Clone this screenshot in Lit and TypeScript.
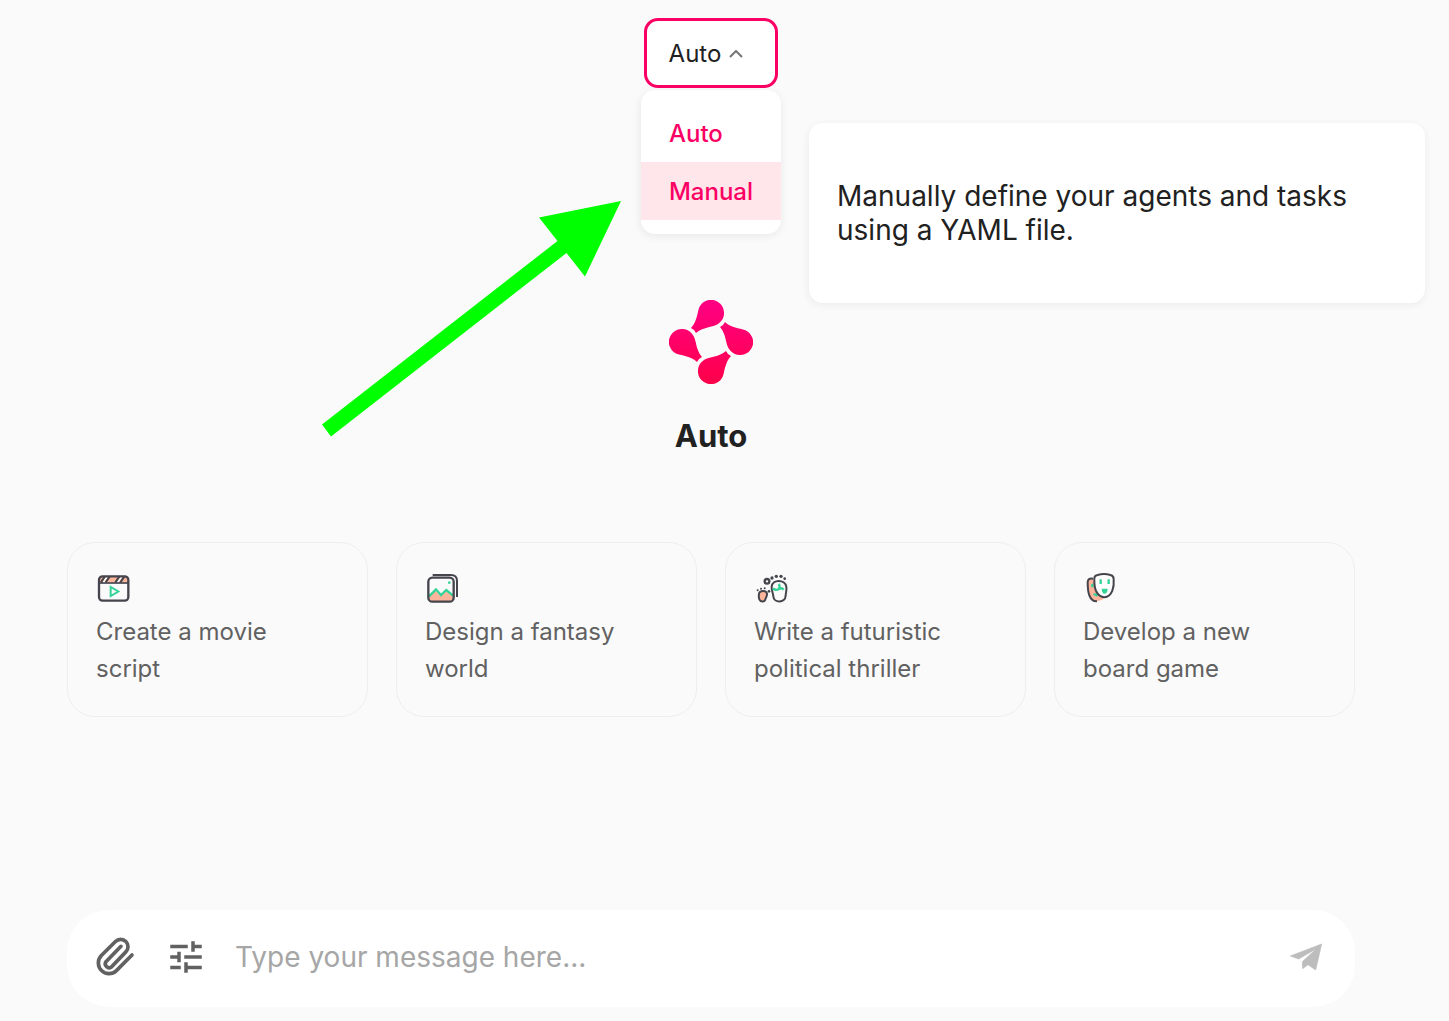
import { LitElement, html, css, svg } from "lit";
import { customElement, state } from "lit/decorators.js";
import { classMap } from "lit/directives/class-map.js";

const DROP = "M22 28C26 24 28 17 29.400 10A13 13 0 1 1 50 23.200C44.500 28 35 26 27 33Q25.500 29.500 22 28Z";

const logo = html`<svg class="logo" viewBox="0 0 84 84" aria-hidden="true">
  <defs>
    <linearGradient id="pink" x1="0" y1="0" x2="0" y2="1">
      <stop offset="0" stop-color="#ff0084" />
      <stop offset="1" stop-color="#ff004a" />
    </linearGradient>
    <clipPath id="drops">
      ${[0, 90, 180, 270].map((a) => svg`<path d=${DROP} transform="rotate(${a} 42 42)" />`)}
    </clipPath>
  </defs>
  <rect width="84" height="84" fill="url(#pink)" clip-path="url(#drops)" />
</svg>`;

const movieIcon = html`<svg class="card-icon" viewBox="108 108 102 102" aria-hidden="true">
  <path d="M118 143V134Q118 124 128 124H194Q204 124 204 134V143Z" fill="#ffb59b" />
  <path d="M130 142L141 126M173 142L184 126" stroke="#fff" stroke-width="5" />
  <path d="M123 142L134 125M137 142L149 125M166 142L178 125M181 142L193 125" stroke="#44454d" stroke-width="6" />
  <rect x="117" y="124" width="88" height="73" rx="11" fill="none" stroke="#44454d" stroke-width="7" />
  <path d="M118 144H204" stroke="#44454d" stroke-width="5" />
  <path d="M152 156V183L175 169.500Z" fill="none" stroke="#36d399" stroke-width="6" />
</svg>`;

const pictureIcon = html`<svg class="card-icon" viewBox="30 18 102 102" aria-hidden="true">
  <path d="M42 96L62 78L76 92L94 80L116 92V98Q116 109 106 109H52Q42 109 42 98Z" fill="#ffb59b" />
  <path d="M42 94L63 73L78 90L94 75L114 92" fill="none" stroke="#36d399" stroke-width="7" />
  <circle cx="103" cy="53" r="4" fill="#36d399" />
  <rect x="40" y="38" width="76" height="72" rx="12" fill="none" stroke="#44454d" stroke-width="7" />
  <path d="M53 30H108Q126 30 126 48V96" fill="none" stroke="#44454d" stroke-width="6" />
</svg>`;

const stepsIcon = html`<svg class="card-icon" viewBox="27 18 102 102" aria-hidden="true">
  <path d="M42 86C44 76 64 74 66 86C67 94 62 98 61 103C59 112 46 111 43 103C41 97 41 92 42 86Z" fill="#ffb59b" stroke="#44454d" stroke-width="6" />
  <path d="M80 65C82 42 120 42 124 65C126 76 122 83 122 92C121 115 86 115 85 94C84 83 79 76 80 65Z" fill="none" stroke="#44454d" stroke-width="6" />
  <path d="M84 70Q92 78 102 72Q106 64 101 57M104 72Q110 67 116 74" fill="none" stroke="#36d399" stroke-width="7" />
  <circle cx="66" cy="49" r="7" fill="none" stroke="#44454d" stroke-width="7" />
  <g fill="#44454d">
    <circle cx="81" cy="39" r="5" />
    <circle cx="94" cy="34" r="5" />
    <circle cx="108" cy="34" r="5" />
    <circle cx="119" cy="41" r="4" />
    <circle cx="38" cy="76" r="3" />
    <circle cx="48" cy="71" r="3" />
    <circle cx="59" cy="70" r="3" />
    <circle cx="72" cy="79" r="4" />
  </g>
</svg>`;

const masksIcon = html`<svg class="card-icon" viewBox="24 18 102 102" aria-hidden="true">
  <path d="M54 41Q38 38 38 52C38 80 42 110 66 109Q80 108 88 100L66 88Z" fill="#ffb59b" />
  <path d="M54 41Q38 38 38 52C38 80 42 110 66 109" fill="none" stroke="#44454d" stroke-width="6" />
  <path d="M52 56V67M56 90Q60 86 67 93" stroke="#36d399" stroke-width="7" fill="none" />
  <path d="M58 40Q58 32 68 30Q87 24 106 30Q116 32 116 42C118 66 112 94 88 97C62 94 57 66 58 40Z" fill="#fff" stroke="#44454d" stroke-width="6" />
  <path d="M77 43V57M101 43V57" stroke="#36d399" stroke-width="7" />
  <path d="M80 71H98Q98 87 86 86Q80 82 80 71Z" fill="#36d399" />
</svg>`;

const clipIcon = html`<svg class="tool-icon" viewBox="107 108 126 126" aria-hidden="true">
  <path d="M218 165L170.600 212.600A32 32 0 0 1 125.400 167.400L168.400 124.400A22 22 0 0 1 199.600 155.600L156 201A11.500 11.500 0 0 1 140 185L185 139" fill="none" stroke="currentColor" stroke-width="11" stroke-linecap="round" />
</svg>`;

const tuneIcon = html`<svg class="tool-icon" viewBox="0 0 24 24" aria-hidden="true">
  <path fill="currentColor" d="M3 17v2h6v-2H3zM3 5v2h10V5H3zm10 16v-2h8v-2h-8v-2h-2v6h2zM7 9v2H3v2h4v2h2V9H7zm14 4v-2H11v2h10zm-6-4h2V7h4V5h-4V3h-2v6z" />
</svg>`;

const sendIcon = html`<svg class="tool-icon" viewBox="45 108 126 126" aria-hidden="true">
  <path d="M61 168L155 132L137 210L114 194L98 206L97 185L139 146L86 177Z" fill="currentColor" stroke="currentColor" stroke-width="2" stroke-linejoin="round" />
</svg>`;

const MODES = ["Auto", "Manual"];

const IDEAS = [
  { icon: movieIcon, text: "Create a movie script" },
  { icon: pictureIcon, text: "Design a fantasy world" },
  { icon: stepsIcon, text: "Write a futuristic political thriller" },
  { icon: masksIcon, text: "Develop a new board game" },
];

@customElement("app-root")
export class AppRoot extends LitElement {
  @state() private mode = "Auto";
  @state() private highlighted = "Manual";
  @state() private open = true;

  static styles = css`
    :host {
      display: block;
      background: #fafafa;
      color: #212121;
      font-family: Inter, "Liberation Sans", sans-serif;
    }
    * {
      box-sizing: border-box;
    }
    button,
    input {
      font: inherit;
      color: inherit;
      border: 0;
      background: none;
      padding: 0;
      margin: 0;
    }
    button {
      cursor: pointer;
    }
    svg {
      display: block;
    }
    .page {
      position: relative;
      min-height: 100vh;
      display: flex;
      flex-direction: column;
      padding: 18px 94px 14px 67px;
      overflow: hidden;
    }
    .picker {
      position: relative;
      align-self: center;
    }
    .picker-button {
      display: flex;
      align-items: center;
      gap: 8px;
      height: 70px;
      padding: 1px 32px 0 22px;
      border: 3px solid #fa0064;
      border-radius: 14px;
      background: #fff;
      font-size: 24px;
      line-height: 36px;
    }
    .chevron {
      width: 14px;
      height: 8px;
    }
    .menu {
      position: absolute;
      top: 72px;
      left: 50%;
      transform: translateX(-50%);
      z-index: 1;
      padding: 14px 0;
      border-radius: 14px;
      background: #fff;
      box-shadow: 0 2px 8px rgba(0, 0, 0, 0.07);
    }
    .option {
      display: block;
      width: 100%;
      height: 58px;
      padding: 0 28px;
      color: #fa0064;
      font-size: 24px;
      font-weight: 500;
      text-align: left;
    }
    .option.highlighted {
      background: #ffe6ea;
    }
    .hint {
      position: absolute;
      top: 33px;
      left: calc(100% + 28px);
      width: 616px;
      padding: 56px 28px;
      border-radius: 14px;
      background: #fff;
      box-shadow: 0 2px 8px rgba(0, 0, 0, 0.06);
      font-size: 28px;
      line-height: 34px;
    }
    .intro {
      display: flex;
      flex-direction: column;
      align-items: center;
      gap: 28px;
      margin-top: 212px;
    }
    .logo {
      width: 84px;
      height: 84px;
    }
    h1 {
      margin: 0;
      font-size: 31px;
      line-height: 48px;
      font-weight: 700;
    }
    .ideas {
      display: grid;
      grid-template-columns: repeat(4, 1fr);
      gap: 28px;
      margin-top: 82px;
    }
    .idea {
      display: flex;
      flex-direction: column;
      gap: 8px;
      min-height: 175px;
      padding: 28px 56px 28px 28px;
      border: 1px solid #eee;
      border-radius: 28px;
      color: #616161;
      font-size: 24px;
      line-height: 37px;
      text-align: left;
    }
    .card-icon {
      width: 34px;
      height: 34px;
    }
    .composer {
      display: flex;
      align-items: center;
      gap: 28px;
      min-height: 97px;
      margin-top: auto;
      padding: 24px 28px 28px;
      border-radius: 42px;
      background: #fff;
      color: #616161;
    }
    .tool-icon {
      width: 42px;
      height: 42px;
    }
    .send {
      color: #bdbdbd;
    }
    .message {
      flex: 1;
      min-width: 0;
      font-size: 28px;
      line-height: 40px;
      outline: none;
    }
    .message::placeholder {
      color: #a6a6a6;
      opacity: 1;
    }
    .arrow {
      position: absolute;
      top: 200px;
      left: 321px;
      width: 301px;
      height: 238px;
      pointer-events: none;
    }
  `;

  private choose(mode: string) {
    this.mode = mode;
    this.open = false;
  }

  render() {
    return html`
      <main class="page">
        <div class="picker">
          <button
            class="picker-button"
            aria-haspopup="listbox"
            aria-expanded=${this.open ? "true" : "false"}
            @click=${() => (this.open = !this.open)}
          >
            ${this.mode}
            <svg class="chevron" viewBox="0 0 14 8" aria-hidden="true">
              <path d="M1 7L7 1L13 7" fill="none" stroke="#757575" stroke-width="2" />
            </svg>
          </button>
          ${this.open
            ? html`<div class="menu">
                <div role="listbox" aria-label="Mode">
                  ${MODES.map(
                    (m) => html`<button
                      role="option"
                      aria-selected=${m === this.mode ? "true" : "false"}
                      class=${classMap({ option: true, highlighted: m === this.highlighted })}
                      @mouseenter=${() => (this.highlighted = m)}
                      @click=${() => this.choose(m)}
                    >${m}</button>`
                  )}
                </div>
                <div class="hint" role="tooltip">
                  Manually define your agents and tasks using a YAML file.
                </div>
              </div>`
            : ""}
        </div>

        <section class="intro">
          ${logo}
          <h1>${this.mode}</h1>
        </section>

        <section class="ideas">
          ${IDEAS.map((i) => html`<button class="idea">${i.icon}<span>${i.text}</span></button>`)}
        </section>

        <form class="composer" @submit=${(e: Event) => e.preventDefault()}>
          <button type="button" aria-label="Attach a file">${clipIcon}</button>
          <button type="button" aria-label="Settings">${tuneIcon}</button>
          <input class="message" type="text" aria-label="Message" placeholder="Type your message here..." />
          <button class="send" type="submit" aria-label="Send">${sendIcon}</button>
        </form>

        <svg class="arrow" viewBox="321 200 301 238" aria-hidden="true">
          <path d="M621 201L585 276.500L566.500 253L331 436.500L322 424.500L557.500 241L539 217.500Z" fill="#00ff00" />
        </svg>
      </main>
    `;
  }
}
